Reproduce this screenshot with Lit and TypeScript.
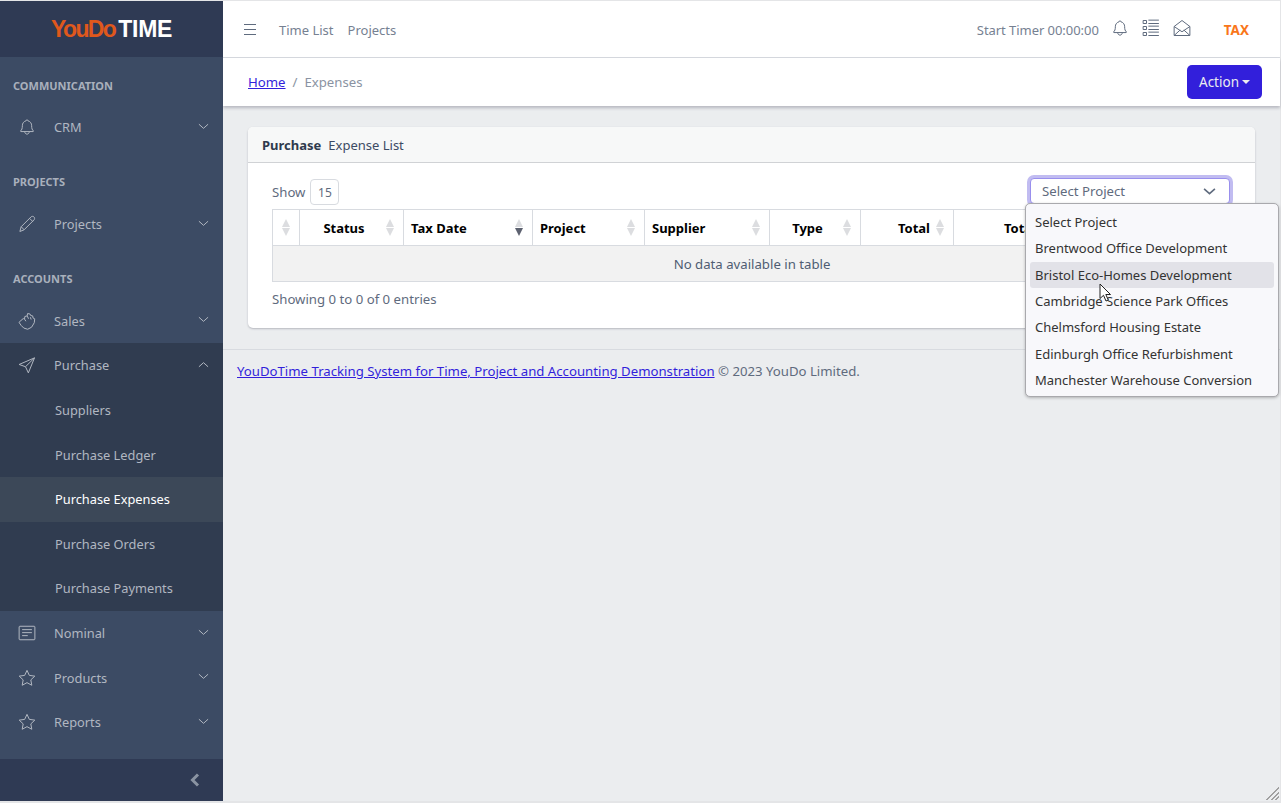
import { LitElement, css, html, svg } from "lit";
import { customElement } from "lit/decorators.js";

const ICONS: Record<string, unknown> = {
  bell: svg`<path d="M12 2.500a1.600 1.600 0 0 0-1.500 1.400C7.400 4.700 5.800 7.200 5.800 10.300c0 3.900-.8 5.500-2.200 6.800-.4.400-.2 1 .4 1h16c.6 0 .8-.6.4-1-1.400-1.300-2.200-2.900-2.200-6.800 0-3.100-1.600-5.600-4.700-6.400A1.600 1.600 0 0 0 12 2.500Z"/><path d="M9 18.200c0 2 1.300 3.300 3 3.300s3-1.300 3-3.300"/>`,
  pencil: svg`<path d="M2.500 22l1.700-6.300L17.300 2.600c1.100-1.100 2.900-1.100 4 0s1.100 2.900 0 4L8.200 19.700 2.500 22Z"/><path d="M15.500 4.500l4 4M4.300 15.700l3.900 4"/>`,
  hand: svg`<path d="M1.500 13.500l5.500-4.800 1.700 1 .4-3.700 3.100-.8.600-3.200 3.300.7.800 2 2.700.5.500 2.900 2.200 1-.6 5.200-3.600 6-5.200 2.700-5.200-1.600-3.600-3.600-2.600-3.800Z"/><path d="M9 9.800l1.500 2.500M12.500 5.500l1.500 3.500M16.500 7l1 3"/>`,
  send: svg`<path d="M22 2.500L1.500 11.300l8.500 3 3.800 8.200L22 2.500Z"/><path d="M22 2.500L10 14.300"/>`,
  notes: svg`<rect x="1.500" y="3" width="21" height="18" rx="1"/><path d="M5.500 7.500h13M5.500 11.500h13M5.500 15.500h7.500"/>`,
  star: svg`<path d="M12 1.800l3.100 6.700 7.300 1-5.300 5 1.300 7.200-6.400-3.500-6.400 3.500 1.300-7.200-5.300-5 7.300-1L12 1.800Z"/>`,
  chevDown: svg`<path d="M2 7l10 9 10-9"/>`,
  chevUp: svg`<path d="M2 17l10-9 10 9"/>`,
  list: svg`<rect x="1.500" y="2" width="4.500" height="4"/><rect x="1.500" y="10" width="4.500" height="4"/><rect x="1.500" y="18" width="4.500" height="4"/><path d="M8.500 1.500h14M8.500 6h14M8.500 9.500h14M8.500 14h14M8.500 17.500h14M8.500 22h14"/>`,
  mail: svg`<path d="M1.500 10L12 2l10.500 8v12h-21V10Z"/><path d="M1.500 10L12 17l10.500-7M1.500 22l8-7.300M22.500 22l-8-7.300"/>`,
};

const icon = (name: string, cls = "") =>
  html`<svg class="icon ${cls}" viewBox="0 0 24 24">${ICONS[name]}</svg>`;

const COLUMNS = [
  { label: "", width: 27, align: "left", pad: "0 7px" },
  { label: "Status", width: 104, align: "center", pad: "0 22px 0 7px" },
  { label: "Tax Date", width: 129, align: "left", pad: "0 7px", sorted: true },
  { label: "Project", width: 112, align: "left", pad: "0 7px" },
  { label: "Supplier", width: 125, align: "left", pad: "0 7px" },
  { label: "Type", width: 91, align: "center", pad: "0 22px 0 7px" },
  { label: "Total", width: 93, align: "right", pad: "0 23px 0 7px" },
  { label: "Total Paid", width: 278, align: "left", pad: "0 7px 0 50px" },
];

const PROJECTS = [
  "Select Project",
  "Brentwood Office Development",
  "Bristol Eco-Homes Development",
  "Cambridge Science Park Offices",
  "Chelmsford Housing Estate",
  "Edinburgh Office Refurbishment",
  "Manchester Warehouse Conversion",
];

const SUBMENU = ["Suppliers", "Purchase Ledger", "Purchase Expenses", "Purchase Orders", "Purchase Payments"];

@customElement("app-root")
export class AppRoot extends LitElement {
  static styles = css`
    :host {
      display: block;
      width: 1281px;
      height: 803px;
      overflow: hidden;
      box-sizing: border-box;
      padding: 1px 1px 2px 0;
      background: #e4e5e7;
      font-family: "Noto Sans", sans-serif;
      font-size: 13.2px;
      color: #4f5d73;
    }
    .shell { display: flex; height: 800px; position: relative; background: #ebedef; }
    .icon { fill: none; stroke: currentColor; display: block; flex: none; }
    .icon * { vector-effect: non-scaling-stroke; stroke-width: 1px; }

    .sidebar { width: 223px; flex: none; display: flex; flex-direction: column; background: #3c4b64; color: #b1b7c1; font-size: 12.8px; }
    .brand { height: 56px; flex: none; display: flex; align-items: center; justify-content: center; background: #2f3a54;
      font-family: "Liberation Sans", sans-serif; font-weight: 700; font-size: 23px; }
    .brand b { color: #e0581c; letter-spacing: -1.6px; }
    .brand span { color: #fff; letter-spacing: -.3px; margin-left: 3px; }
    .nav { flex: 1; padding-top: 10px; }
    .title { height: 36px; padding-bottom: 2px; display: flex; align-items: center; padding-left: 13px; font-size: 11px; font-weight: 700;
      color: #a9b0bc; margin-top: 14.200px; }
    .title:first-child { margin-top: 0; }
    .item { height: 44.600px; display: flex; align-items: center; }
    .item .icon { width: 18px; height: 18px; margin: 0 18px; }
    .item .label { flex: 1; }
    .item .icon.chev { width: 11px; height: 11px; margin: -2px 14px 0 0; }
    .group { background: #303c50; }
    .sub { padding-left: 55px; }
    .sub.active { background: #3c4858; color: #fff; }
    .toggler { height: 42px; flex: none; background: #2f3a54; display: flex; align-items: center; justify-content: flex-end;
      padding-right: 22px; color: #8a93a2; }
    .toggler .icon { width: 12px; height: 14px; }
    .toggler .icon * { stroke-width: 3px; }

    .main { flex: 1; min-width: 0; display: flex; flex-direction: column; }
    .topbar { height: 55px; flex: none; display: flex; align-items: center; background: #fff; border-bottom: 1px solid #d8dbe0;
      padding: 1px 0 0 21px; color: #768192; font-size: 13px; }
    .burger { width: 12px; height: 11px; margin: -1px 23px 0 0; border-top: 1px solid #5f6b7e; border-bottom: 1px solid #5f6b7e;
      position: relative; box-sizing: border-box; }
    .burger::after { content: ""; position: absolute; left: 0; right: 0; top: 4px; border-top: 1px solid #5f6b7e; }
    .toplink { margin-right: 14px; }
    .spacer { flex: 1; }
    .timer { margin-right: 12px; letter-spacing: -.05px; }
    .topicons { display: flex; align-items: center; gap: 13px; margin: -3px 0 0; color: #5f6b7e; }
    .topicons .icon { width: 18px; height: 18px; }
    .tax { margin: 0 31px 0 33px; color: #f9761a; font-weight: 700; font-size: 13.500px; }

    .subheader { height: 48px; flex: none; display: flex; align-items: center; justify-content: space-between; background: #fff;
      padding: 0 18px 0 25px; box-shadow: 0 2px 3px rgba(60, 60, 80, .3); position: relative; }
    .crumbs { display: flex; gap: 7px; color: #8a93a2; }
    a { color: #321fdb; text-decoration: underline; }
    .btn { height: 34px; width: 75px; box-sizing: border-box; display: flex; align-items: center; justify-content: center; gap: 3px;
      background: #321fdb; color: #ebedef; border-radius: 5px; font-size: 13.500px; }
    .caret { border-top: 4px solid currentColor; border-left: 4px solid transparent; border-right: 4px solid transparent; }

    .body { flex: none; padding: 21px 25px 0 25px; }
    .card { height: 201px; box-sizing: border-box; background: #fff; border-radius: 5px; box-shadow: 0 1px 2px rgba(60, 60, 80, .3); }
    .card-head { height: 36px; box-sizing: border-box; display: flex; align-items: center; gap: 7px; padding-left: 14px;
      background: #f7f8f8; border-bottom: 1px solid #d0d2d5; border-radius: 5px 5px 0 0; color: #3c4b64; font-size: 13px; }
    .card-head b { color: #2f3a4d; }
    .card-body { padding: 15px 24px 0; }
    .toolbar { display: flex; align-items: flex-start; height: 26px; margin-bottom: 5px; }
    .show { display: flex; align-items: center; gap: 5px; color: #5f6b7e; flex: 1; margin-top: 1px; }
    .show span { width: 29px; height: 26px; box-sizing: border-box; border: 1px solid #d8dbe0; border-radius: 4px;
      display: flex; align-items: center; justify-content: center; font-size: 12px; }
    .select { width: 200px; height: 26px; box-sizing: border-box; margin-right: 1px; display: flex; align-items: center;
      justify-content: space-between; padding: 0 13px 0 11px; border: 1px solid #998fed; border-radius: 4px; background: #fff;
      box-shadow: 0 0 0 3px #c1bcf1; color: #5f6b7e; }
    .select .icon { width: 13px; height: 13px; }
    .select .icon * { stroke-width: 1.600px; }

    table { border-collapse: collapse; table-layout: fixed; width: 959px; }
    th { height: 36px; box-sizing: border-box; border: 1px solid #d8dbe0; color: #000; font-weight: 700; position: relative; font-size: 13px; }
    .sort { position: absolute; right: 9px; top: 9px; display: flex; flex-direction: column; gap: 1px; }
    .sort i { width: 0; height: 0; border-left: 4.500px solid transparent; border-right: 4.500px solid transparent; }
    .sort .up { border-bottom: 8px solid #dcdde0; }
    .sort .down { border-top: 8px solid #dcdde0; }
    .sort .down.on { border-top-color: #5d6270; }
    td { height: 36px; box-sizing: border-box; background: #f2f2f2; border: 1px solid #d8dbe0; text-align: center; color: #4f5d73; }
    .info { margin-top: 8px; color: #5f6b7e; }

    .footer { margin-top: 21px; border-top: 1px solid #d8dbe0; padding: 12px 14px; color: #5f6b7e; }

    .dropdown { position: absolute; left: 1025px; top: 202px; width: 254px; height: 194px; box-sizing: border-box; padding: 5px 4px;
      background: #f8f8fb; border: 1px solid #a9a9ad; border-radius: 5px; box-shadow: 0 1px 3px rgba(0, 0, 0, .25); color: #333;
      font-size: 13px; }
    .option { height: 26.300px; display: flex; align-items: center; padding-left: 5px; border-radius: 3px; }
    .option.hover { background: #e2e2e8; }
    .cursor { position: absolute; left: 1099px; top: 282px; width: 14px; height: 20px; }
    .grip { position: absolute; right: 1px; bottom: 1px; width: 14px; height: 14px;
      background: repeating-linear-gradient(135deg, transparent 0 1.500px, #a0a0a0 1.500px 3px);
      clip-path: polygon(100% 0, 100% 100%, 0 100%); }
  `;

  private navItem(name: string, label: string, chev = "chevDown") {
    return html`<div class="item">
      ${icon(name)}<span class="label">${label}</span>${icon(chev, "chev")}
    </div>`;
  }

  render() {
    return html`<div class="shell">
      <aside class="sidebar">
        <div class="brand"><b>YouDo</b><span>TIME</span></div>
        <nav class="nav">
          <div class="title">COMMUNICATION</div>
          ${this.navItem("bell", "CRM")}
          <div class="title">PROJECTS</div>
          ${this.navItem("pencil", "Projects")}
          <div class="title">ACCOUNTS</div>
          ${this.navItem("hand", "Sales")}
          <div class="group">
            ${this.navItem("send", "Purchase", "chevUp")}
            ${SUBMENU.map(
              (s) => html`<div class="item sub ${s === "Purchase Expenses" ? "active" : ""}">${s}</div>`
            )}
          </div>
          ${this.navItem("notes", "Nominal")}
          ${this.navItem("star", "Products")}
          ${this.navItem("star", "Reports")}
        </nav>
        <div class="toggler">
          <svg class="icon" viewBox="0 0 12 14"><path d="M9 1.500L3.500 7 9 12.500"/></svg>
        </div>
      </aside>

      <main class="main">
        <header class="topbar">
          <div class="burger"></div>
          <span class="toplink">Time List</span>
          <span class="toplink">Projects</span>
          <span class="spacer"></span>
          <span class="timer">Start Timer 00:00:00</span>
          <div class="topicons">${icon("bell")}${icon("list")}${icon("mail")}</div>
          <span class="tax">TAX</span>
        </header>
        <div class="subheader">
          <div class="crumbs"><a href="#">Home</a><span>/</span><span>Expenses</span></div>
          <div class="btn">Action<span class="caret"></span></div>
        </div>
        <div class="body">
          <section class="card">
            <div class="card-head"><b>Purchase</b><span>Expense List</span></div>
            <div class="card-body">
              <div class="toolbar">
                <div class="show">Show <span>15</span></div>
                <div class="select">Select Project ${icon("chevDown")}</div>
              </div>
              <table>
                <colgroup>${COLUMNS.map((c) => html`<col style="width:${c.width}px" />`)}</colgroup>
                <thead>
                  <tr>
                    ${COLUMNS.map(
                      (c) => html`<th style="text-align:${c.align}; padding:${c.pad}">
                        ${c.label}
                        <span class="sort"><i class="up"></i><i class="down ${c.sorted ? "on" : ""}"></i></span>
                      </th>`
                    )}
                  </tr>
                </thead>
                <tbody><tr><td colspan="8">No data available in table</td></tr></tbody>
              </table>
              <div class="info">Showing 0 to 0 of 0 entries</div>
            </div>
          </section>
        </div>
        <footer class="footer">
          <a href="#">YouDoTime Tracking System for Time, Project and Accounting Demonstration</a> © 2023 YouDo Limited.
        </footer>
      </main>

      <div class="dropdown">
        ${PROJECTS.map(
          (p, i) => html`<div class="option ${i === 2 ? "hover" : ""}">${p}</div>`
        )}
      </div>
      <svg class="cursor" viewBox="0 0 14 20">
        <path d="M1 1v14.500l3.500-3.200 2.500 5.700 2.300-1-2.500-5.500h4.700L1 1Z" fill="#fff" stroke="#222" stroke-width="1"/>
      </svg>
      <div class="grip"></div>
    </div>`;
  }
}
